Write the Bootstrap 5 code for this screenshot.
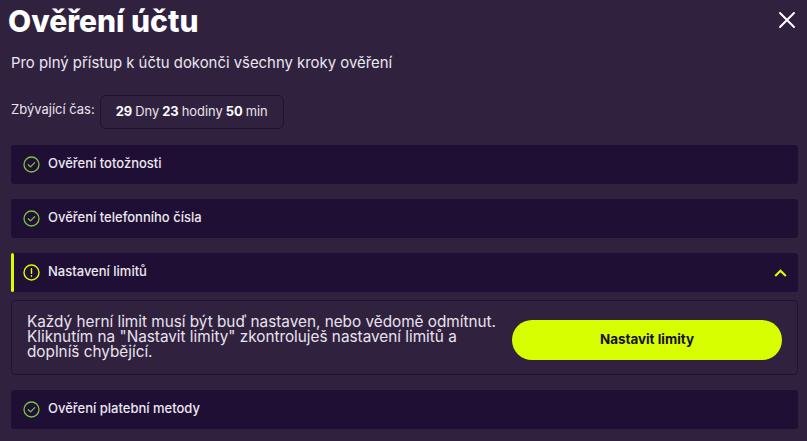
<!DOCTYPE html>
<html lang="cs">
<head>
<meta charset="utf-8">
<title>Ověření účtu</title>
<link href="https://cdn.jsdelivr.net/npm/bootstrap@5.3.0/dist/css/bootstrap.min.css" rel="stylesheet">
<style>
html,body{height:100%;overflow:hidden}
body{background:#30213f;color:#f1eef4;font-family:Inter,"Noto Sans",sans-serif;width:807px;height:441px}
.shell{padding:0 9px 0 11px;height:441px;position:relative}
.ttl{font-size:30px;font-weight:800;color:#fff;line-height:36px;margin:3px 0 0 -3px}
.sub{font-size:14.9px;line-height:20px;margin:14px 0 0;color:#eae6ee}
.timer-row{margin-top:22px;height:34px}
.timer-lbl{font-size:13px;color:#e8e4ec;position:relative;top:-2px}
.timer{width:184px;height:34px;margin-left:5px;border:1px solid #1f1133;border-radius:6px;font-size:12.9px;color:#e8e4ec;gap:3px}
.timer b{font-weight:700;color:#fff}
.stack{margin-top:16px}
.step{height:39px;background:#200f35;border-radius:3px;padding:0 0 2px 12px;gap:8px;font-size:13px;font-weight:500;color:#ece8f0;margin-bottom:15px}
.step svg{flex:none;margin-top:2px}
.step.open{margin-bottom:8px;position:relative}
.step.open::before{content:"";position:absolute;left:0;top:0;bottom:0;width:3px;background:#d7ff00;border-radius:2px}
.panel{height:75px;border:1px solid #21123a;border-radius:4px;background:#30213f;padding:0 15px;margin-bottom:15px}
.panel p{width:472px;font-size:15.3px;line-height:14.8px;margin:0;color:#e8e4ec}
.cta{width:270px;height:40px;background:#d7ff00;color:#15101c;border:0;border-radius:20px;font-size:13.4px;font-weight:700;padding:0;margin-top:4px}
.cta:hover{background:#d7ff00;color:#15101c}
.closex{position:absolute;top:8px;right:11px;padding:0;border:0;background:none;line-height:0}
.chev{margin-right:11px}
</style>
</head>
<body>
<div class="shell">
  <h1 class="ttl">Ověření účtu</h1>
  <p class="sub">Pro plný přístup k účtu dokonči všechny kroky ověření</p>
  <div class="timer-row d-flex align-items-center">
    <span class="timer-lbl">Zbývající čas:</span>
    <div class="timer d-flex align-items-center justify-content-center"><b>29</b> Dny <b>23</b> hodiny <b>50</b> min</div>
  </div>
  <div class="stack">
    <div class="step d-flex align-items-center">
      <svg width="17" height="17" viewBox="0 0 17 17" fill="none" stroke="#7cc142" stroke-width="1.3"><circle cx="8.5" cy="8.5" r="7.5"/><path d="M5.3 8.7l2.2 2.2 4.2-4.3" stroke-linecap="round" stroke-linejoin="round"/></svg>
      <span>Ověření totožnosti</span>
    </div>
    <div class="step d-flex align-items-center">
      <svg width="17" height="17" viewBox="0 0 17 17" fill="none" stroke="#7cc142" stroke-width="1.3"><circle cx="8.5" cy="8.5" r="7.5"/><path d="M5.3 8.7l2.2 2.2 4.2-4.3" stroke-linecap="round" stroke-linejoin="round"/></svg>
      <span>Ověření telefonního čísla</span>
    </div>
    <div class="step open d-flex align-items-center">
      <svg width="17" height="17" viewBox="0 0 17 17" fill="none" stroke="#d7ff00" stroke-width="1.4"><circle cx="8.5" cy="8.5" r="7.5"/><path d="M8.5 4.6v4.8M8.5 11.6v.6" stroke-linecap="round"/></svg>
      <span>Nastavení limitů</span>
      <svg class="chev ms-auto" width="13" height="8" viewBox="0 0 13 8" fill="none" stroke="#d7ff00" stroke-width="2.2"><path d="M1.2 7L6.5 1.8 11.8 7"/></svg>
    </div>
    <div class="panel d-flex align-items-center justify-content-between">
      <p>Každý herní limit musí být buď nastaven, nebo vědomě odmítnut. Kliknutím na "Nastavit limity" zkontroluješ nastavení limitů a doplníš chybějící.</p>
      <button class="btn cta" type="button">Nastavit limity</button>
    </div>
    <div class="step d-flex align-items-center">
      <svg width="17" height="17" viewBox="0 0 17 17" fill="none" stroke="#7cc142" stroke-width="1.3"><circle cx="8.5" cy="8.5" r="7.5"/><path d="M5.3 8.7l2.2 2.2 4.2-4.3" stroke-linecap="round" stroke-linejoin="round"/></svg>
      <span>Ověření platební metody</span>
    </div>
  </div>
  <button class="closex" type="button" aria-label="Zavřít"><svg width="18" height="18" viewBox="0 0 18 18" stroke="#fff" stroke-width="2" stroke-linecap="round"><path d="M2 2l14 14M16 2L2 16"/></svg></button>
</div>
<script src="https://cdn.jsdelivr.net/npm/bootstrap@5.3.0/dist/js/bootstrap.bundle.min.js"></script>
</body>
</html>
